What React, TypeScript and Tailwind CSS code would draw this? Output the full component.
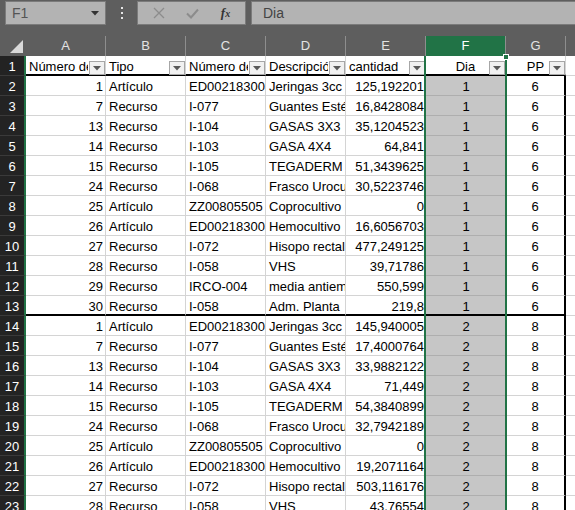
import React from 'react';

type Row = [number, string, string, string, string, number, number];

const ROWS: Row[] = [
  [1, 'Artículo', 'ED00218300', 'Jeringas 3cc', '125,192201', 1, 6],
  [7, 'Recurso', 'I-077', 'Guantes Estériles', '16,8428084', 1, 6],
  [13, 'Recurso', 'I-104', 'GASAS 3X3', '35,1204523', 1, 6],
  [14, 'Recurso', 'I-103', 'GASA 4X4', '64,841', 1, 6],
  [15, 'Recurso', 'I-105', 'TEGADERM GRANDE', '51,3439625', 1, 6],
  [24, 'Recurso', 'I-068', 'Frasco Urocultivo', '30,5223746', 1, 6],
  [25, 'Artículo', 'ZZ00805505', 'Coprocultivo', '0', 1, 6],
  [26, 'Artículo', 'ED00218300', 'Hemocultivo', '16,6056703', 1, 6],
  [27, 'Recurso', 'I-072', 'Hisopo rectal', '477,249125', 1, 6],
  [28, 'Recurso', 'I-058', 'VHS', '39,71786', 1, 6],
  [29, 'Recurso', 'IRCO-004', 'media antiemético', '550,599', 1, 6],
  [30, 'Recurso', 'I-058', 'Adm. Planta', '219,8', 1, 6],
  [1, 'Artículo', 'ED00218300', 'Jeringas 3cc', '145,940005', 2, 8],
  [7, 'Recurso', 'I-077', 'Guantes Estériles', '17,4000764', 2, 8],
  [13, 'Recurso', 'I-104', 'GASAS 3X3', '33,9882122', 2, 8],
  [14, 'Recurso', 'I-103', 'GASA 4X4', '71,449', 2, 8],
  [15, 'Recurso', 'I-105', 'TEGADERM GRANDE', '54,3840899', 2, 8],
  [24, 'Recurso', 'I-068', 'Frasco Urocultivo', '32,7942189', 2, 8],
  [25, 'Artículo', 'ZZ00805505', 'Coprocultivo', '0', 2, 8],
  [26, 'Artículo', 'ED00218300', 'Hemocultivo', '19,2071164', 2, 8],
  [27, 'Recurso', 'I-072', 'Hisopo rectal', '503,116176', 2, 8],
  [28, 'Recurso', 'I-058', 'VHS', '43,76554', 2, 8],
];

const HEADERS = ['Número de artículo', 'Tipo', 'Número de recurso', 'Descripción', 'cantidad', 'Dia', 'PP'];

const FilterButton = () => (
  <span className="absolute right-0 top-[5px] w-[16px] h-[14px] bg-[#f1f1f1] border border-[#a6a6a6] flex items-center justify-center">
    <svg width="8" height="5" viewBox="0 0 8 5">
      <path d="M0 0 L8 0 L4 4.5 Z" fill="#595959" />
    </svg>
  </span>
);

const TopBar = () => (
  <div className="h-[26px] flex items-stretch pt-[1px] pb-[1px]">
    <div className="ml-[5px] w-[101px] bg-[#b3b3b3] border border-[#7b7b7b] flex items-center justify-between pl-[6px] pr-[6px] text-[14px] text-[#555]">
      <span>F1</span>
      <svg width="8" height="5" viewBox="0 0 8 5">
        <path d="M0 0 L8 0 L4 4.5 Z" fill="#333" />
      </svg>
    </div>
    <div className="w-[31px] flex flex-col items-center justify-center gap-[3px]">
      <span className="w-[2px] h-[2px] bg-[#e6e6e6]" />
      <span className="w-[2px] h-[2px] bg-[#e6e6e6]" />
      <span className="w-[2px] h-[2px] bg-[#e6e6e6]" />
    </div>
    <div className="w-[109px] bg-[#b3b3b3] border border-[#7b7b7b] flex items-center justify-around px-[4px]">
      <svg width="12" height="12" viewBox="0 0 12 12">
        <path d="M1 1 L11 11 M11 1 L1 11" stroke="#8c8c8c" strokeWidth="1.3" />
      </svg>
      <svg width="13" height="11" viewBox="0 0 13 11">
        <path d="M1 5.5 L5 9.5 L12 1.5" stroke="#8c8c8c" strokeWidth="2" fill="none" />
      </svg>
      <span className="font-['Liberation_Serif',serif] italic font-bold text-[13px] text-[#333]">
        f<span className="text-[10px]">x</span>
      </span>
    </div>
    <div className="ml-[5px] flex-1 bg-[#b3b3b3] border border-[#7b7b7b] border-r-0 flex items-center pl-[11px] text-[14px] text-[#444]">
      Dia
    </div>
  </div>
);

const ColumnHeaders = () => {
  const cols = [
    { l: 'A', w: 'w-[80px]' },
    { l: 'B', w: 'w-[80px]' },
    { l: 'C', w: 'w-[80px]' },
    { l: 'D', w: 'w-[80px]' },
    { l: 'E', w: 'w-[80px]' },
    { l: 'F', w: 'w-[80px]' },
    { l: 'G', w: 'w-[60px]' },
  ];
  return (
    <div className="h-[20px] flex">
      <div className="w-[26px] relative">
        <svg className="absolute left-[10px] top-[4px]" width="13" height="13" viewBox="0 0 13 13">
          <path d="M13 0 L13 13 L0 13 Z" fill="#d9d9d9" />
        </svg>
      </div>
      {cols.map((c) => (
        <div
          key={c.l}
          className={`${c.w} shrink-0 flex items-center justify-center border-r border-[#8e8e8e] ${
            c.l === 'F' ? 'bg-[#217346] text-white' : 'text-[#e3e3e3]'
          }`}
        >
          {c.l}
        </div>
      ))}
      <div className="flex-1" />
    </div>
  );
};

const RowHeader = ({ n }: { n: number }) => (
  <div className="w-[26px] shrink-0 bg-[#232323] border-r-2 border-r-[#217346] border-b border-b-[#3a3a3a] text-white flex justify-center leading-[21px]">
    {n}
  </div>
);

const HeaderRow = () => (
  <div className="h-[20px] flex">
    <RowHeader n={1} />
    {HEADERS.map((h, i) => (
      <div
        key={h}
        className={`${i === 6 ? 'w-[60px]' : 'w-[80px]'} shrink-0 relative bg-white border-r border-r-[#d4d4d4] border-b-2 border-b-black leading-[21px] text-black`}
      >
        {i >= 5 ? (
          <div className="text-center whitespace-nowrap">{h}</div>
        ) : (
          <div className="pl-[3px] mr-[17px] overflow-hidden whitespace-nowrap">{h}</div>
        )}
        <FilterButton />
      </div>
    ))}
    <div className="flex-1 bg-white border-b border-[#d4d4d4]" />
  </div>
);

const DataRow = ({ row, n }: { row: Row; n: number }) => {
  const bottom = n === 13 ? 'border-b-2 border-b-black' : 'border-b border-b-[#d4d4d4]';
  const cell = `w-[80px] shrink-0 overflow-hidden whitespace-nowrap bg-white border-r border-r-[#d4d4d4] leading-[21px] ${bottom}`;
  return (
    <div className="h-[20px] flex text-black">
      <RowHeader n={n} />
      <div className={`${cell} text-right pr-[2px]`}>{row[0]}</div>
      <div className={`${cell} pl-[3px]`}>{row[1]}</div>
      <div className={`${cell} pl-[3px]`}>{row[2]}</div>
      <div className={`${cell} pl-[3px]`}>{row[3]}</div>
      <div className={`${cell} text-right pr-[1px]`}>{row[4]}</div>
      <div
        className={`w-[80px] shrink-0 bg-[#c6c6c6] text-center leading-[21px] ${
          n === 13 ? 'border-b-2 border-b-black' : 'border-b border-b-[#aeaeae]'
        }`}
      >
        {row[5]}
      </div>
      <div className={`w-[60px] shrink-0 bg-white text-center leading-[21px] border-r-2 border-r-black ${bottom}`}>
        {row[6]}
      </div>
      <div className="flex-1 bg-white border-b border-[#d4d4d4]" />
    </div>
  );
};

export default function App() {
  return (
    <div className="relative w-[575px] h-[510px] overflow-hidden bg-[#5e5e5e] font-['Liberation_Sans',Arial,sans-serif] text-[13px]">
      <TopBar />
      <div className="mt-[10px]">
        <ColumnHeaders />
        <HeaderRow />
        {ROWS.map((r, i) => (
          <DataRow key={i} row={r} n={i + 2} />
        ))}
      </div>
      {/* column F selection outline */}
      <div className="absolute left-[424px] top-[56px] bottom-0 w-[83px] border-x-2 border-[#217346] pointer-events-none" />
      <div className="absolute left-[503px] top-[54px] w-[6px] h-[6px] bg-[#217346] border border-white" />
    </div>
  );
}
